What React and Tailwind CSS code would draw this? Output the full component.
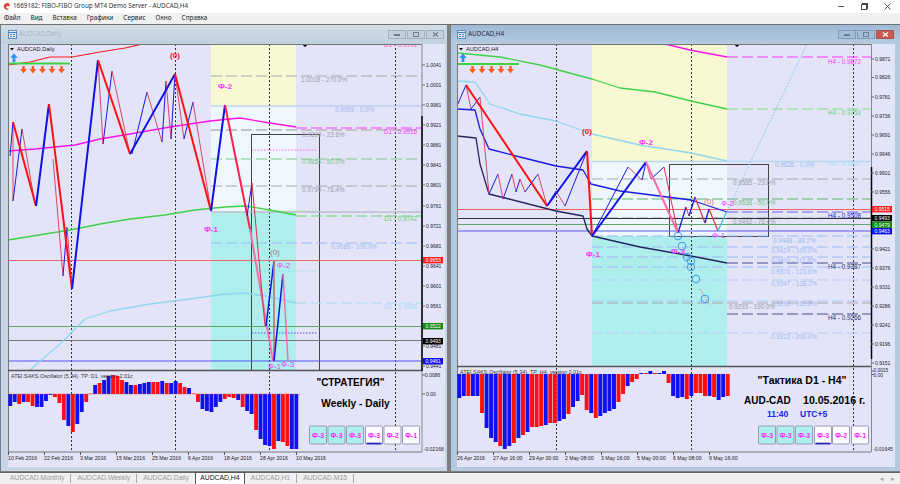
const GRAY = "#9b9ba6", BLUE = "#9db9f2", GREEN = "#74c07c", MAG = "#ff33ff", MA = "#ff10f0";

function Poly({ p, c, w = 1, dash, op }) {
  return <polyline points={p} fill="none" stroke={c} strokeWidth={w} strokeDasharray={dash} opacity={op} strokeLinejoin="round" />;
}
function H({ x1, x2, y, c, w = 1, dash }) {
  return <line x1={x1} x2={x2} y1={y} y2={y} stroke={c} strokeWidth={w} strokeDasharray={dash} />;
}
function V({ x, y1, y2, c = "#333", w = 1, dash = "2 2" }) {
  return <line x1={x} x2={x} y1={y1} y2={y2} stroke={c} strokeWidth={w} strokeDasharray={dash} />;
}
function T({ x, y, c = "#000", s = 6.3, b, children, anchor }) {
  return <text x={x} y={y} fill={c} fontSize={s} fontWeight={b ? 700 : 400} textAnchor={anchor}>{children}</text>;
}
function ArrowDown({ x, y }) {
  return <path d={`M${x - 1.2} ${y - 4}h2.4v3h2.2l-3.4 4.6-3.4-4.6h2.2z`} fill="#ff5a1f" />;
}
function ArrowUp({ x, y }) {
  return <path d={`M${x} ${y - 4.5}l3.8 4.2h-2.4v4.4h-2.8v-4.4h-2.4z`} fill="#2a93f0" />;
}
function Btn({ x, w = 17, y = 427, teal, label, under }) {
  return (
    <g>
      <rect x={x} y={y} width={w} height={18} rx="1" fill={teal ? "#aeeeec" : "#fbfbff"} stroke="#9a9ab8" strokeWidth="1" />
      {under && <line x1={x + 1} x2={x + w - 1} y1={y + 17.5} y2={y + 17.5} stroke="#2020c0" strokeWidth="1.6" />}
      <text x={x + w / 2} y={y + 11.5} fill="#ff1fff" fontSize="7" fontWeight="700" textAnchor="middle">{label}</text>
    </g>
  );
}
function Price({ x, y, bg, fg = "#fff", children }) {
  return (
    <g>
      <rect x={x} y={y - 3} width={20} height={6.4} fill={bg} />
      <text x={x + 2.5} y={y + 2} fill={fg} fontSize="5">{children}</text>
    </g>
  );
}
function Bars({ data, x0, step, zero }) {
  return data.map(([col, h], i) => (
    <rect key={i} x={x0 + i * step} width={step - 0.6} y={h >= 0 ? zero - h : zero} height={Math.abs(h)} fill={col === "b" ? "#1010f0" : "#ff0f0f"} />
  ));
}

const leftBars = "b-12 b-8 r-10 b-8 r-8 r-12 b-13 b-13 b-7 b-1 r-3 r-9 r-26 b-32 r-38 b-30 b-18 r-8 r0.5 b9 r11 b14 b18 r19 r18 r14 b12 b9 r9 b10 b11 b12 r12 r12 b13 r11 b11 b13 r11 r7 b6 r0.5 r-8 b-15 b-17 b-18 b-13 b-8 r-5 r-3 r-4 b-6 r-13 b-17 b-20 r-36 b-45 b-51 b-52 r-55 b-47 r-48 r-52 b-55 b-55"
  .split(" ").map(s => [s[0], parseFloat(s.slice(1))]);
const rightBars = "b-24 b-22 r-22 b-22 b-22 r-39 b-54 b-64 b-68 r-72 b-75 b-72 r-69 b-64 r-61 b-58 r-53 r-53 r-52 b-51 r-49 r-49 b-47 b-45 r-40 b-33 b-27 r-21 r-36 b-39 r-44 b-42 b-39 b-37 b-35 r-28 r-20 b-12 r-8 r-5 b1 r1 b3 r1 b1 b3 r-9 b-22 b-24 b-23 r-25 b-22 r-19 r-19 r-22 b-22 r-23 b-26 b-23 r-22"
  .split(" ").map(s => [s[0], parseFloat(s.slice(1))]);

function LeftChart() {
  const ticks = [[1.0041, 66], [1.0001, 86], [0.9961, 106], [0.9921, 126], [0.9881, 146], [0.9841, 166], [0.9801, 186], [0.9761, 207], [0.9721, 227], [0.9681, 247], [0.9641, 267], [0.9601, 287], [0.9561, 307], [0.9481, 347], [0.9441, 367]];
  const dates = [[8, "10 Feb 2016"], [44, "22 Feb 2016"], [80, "3 Mar 2016"], [116, "15 Mar 2016"], [152, "25 Mar 2016"], [188, "6 Apr 2016"], [224, "18 Apr 2016"], [260, "28 Apr 2016"], [296, "10 May 2016"]];
  return (
    <svg viewBox="8 45 437 423" className="block w-[437px] h-[423px]">
      <rect x="8" y="45" width="437" height="423" fill="#e4e4f8" />
      <rect x="211" y="45" width="85" height="62" fill="#f8f8d2" />
      <rect x="211" y="107" width="85" height="106" fill="#eef6fe" />
      <rect x="211" y="213" width="85" height="158" fill="#aeeeec" />
      <rect x="251.5" y="135.5" width="68" height="236" fill="none" stroke="#444" />
      {[71.5, 175.5, 269.5, 395.5].map(x => <V key={x} x={x} y1={45} y2={453} />)}

      <H x1={211} x2={422} y={77} c="#a8a8a8" w={1.2} dash="11 4" />
      <H x1={211} x2={422} y={107} c="#a9c2f0" />
      <H x1={211} x2={422} y={131} c="#b4b4b4" w={1.5} dash="11 4" />
      <H x1={211} x2={422} y={160} c="#7ccb87" w={1.2} dash="11 4" />
      <H x1={211} x2={422} y={187} c="#a8a8a8" w={1.2} dash="11 4" />
      <H x1={211} x2={422} y={213} c="#bdbdc8" w={1.6} />
      <H x1={211} x2={422} y={244} c="#9db9f2" w={1.2} dash="11 4" />
      <H x1={296} x2={422} y={129} c={MAG} w={1.2} dash="11 4" />
      <H x1={296} x2={422} y={217} c="#63d56b" w={1.2} dash="11 4" />
      <H x1={296} x2={422} y={304} c="#a6dcf2" w={1.2} dash="11 4" />
      <H x1={252} x2={318} y={151} c="#ff66ff" dash="1.5 1.5" />
      <H x1={252} x2={318} y={212} c="#9fd8a8" dash="1.5 1.5" />
      <H x1={252} x2={318} y={272} c="#8fdcf0" dash="1.5 1.5" />
      <H x1={252} x2={318} y={334} c="#8080f0" w={1.4} dash="1.5 1.5" />

      <H x1={8} x2={422} y={261.5} c="#e86a6a" />
      <H x1={8} x2={422} y={327.5} c="#5fa868" />
      <H x1={8} x2={422} y={341.5} c="#777" w={1.2} />
      <H x1={8} x2={422} y={362} c="#5555f5" />

      <Poly p="9,66 30,63 50,58 72,58 100,53 125,49 143,45" c="#ff1a1a" w={1.2} />
      <H x1={9} x2={70} y={64.5} c="#3fd040" w={2} />
      <Poly p="8,152 35,150 75,146 100,140 130,135 170,128 210,122 240,119 270,124 296,128" c={MA} w={1.3} />
      <Poly p="8,241 45,235 70,231 100,225 130,220 165,216 195,211 225,208 245,207 270,211 296,216" c="#3fd048" w={1.3} />
      <Poly p="30,371 60,345 85,320 110,312 150,305 190,300 225,295 245,294 270,298 296,304" c="#8fd6ee" w={1.3} />

      <Poly p="13,123 13,202" c="#d84868" />
      <Poly p="22,130 35,205" c="#d84868" />
      <Poly p="53,160 63,277" c="#d84868" />
      <Poly p="63,277 67,228" c="#1a1ae0" />
      <Poly p="67,228 72,290" c="#e23a60" />
      <Poly p="98,61 103,145" c="#d84868" />
      <Poly p="103,145 112,72" c="#1a1ae0" />
      <Poly p="112,72 130,155" c="#d84868" />
      <Poly p="132,155 147,93" c="#1a1ae0" />
      <Poly p="147,93 162,143" c="#d84868" />
      <Poly p="162,143 166,82" c="#1a1ae0" />
      <Poly p="166,82 171,140" c="#d84868" />
      <Poly p="171,140 175,75" c="#1a1ae0" />
      <Poly p="175,75 184,140" c="#d84868" />
      <Poly p="184,140 193,103" c="#1a1ae0" />
      <Poly p="193,103 211,212" c="#d84868" />
      <Poly p="13,202 22,130" c="#1a1ae0" />
      <Poly p="10,157 13,123" c="#1a1ae0" />

      <Poly p="13,123 36,207" c="#ff1010" w={2} />
      <Poly p="36,207 49,105" c="#1010e8" w={2} />
      <Poly p="49,105 72,290" c="#ff1010" w={2} />
      <Poly p="72,290 98,61" c="#1010e8" w={2} />
      <Poly p="98,61 130,155" c="#ff1010" w={2} />
      <Poly p="130,155 175,75" c="#1010e8" w={2} />
      <Poly p="175,75 211,212" c="#ff1010" w={2} />
      <Poly p="211,212 225,106" c="#1010e8" w={2} />
      <Poly p="225,106 250,230" c="#ff2050" w={2} />
      <Poly p="250,230 273,362" c="#ff6aa8" w={2} />
      <Poly p="247,217 252,184" c="#1a1ae0" />
      <Poly p="252,184 265,327" c="#d83050" />
      <Poly p="266,327 274,262" c="#1010e8" w={1.5} />
      <Poly p="274,262 274,362" c="#c86a7a" w={1.6} />
      <Poly p="274,362 283,275" c="#1010e8" w={1.5} />
      <Poly p="283,275 288,362" c="#ff6aa8" w={1.5} />

      <polygon points="301.5,45 308.5,45 305,48" fill="#000" />
      <polygon points="10,49 14,49 12,51.5" fill="#000" />
      <T x={17} y={52} s={5.6} c="#222">AUDCAD,Daily</T>
      <ArrowUp x={14} y={59} />
      {[23.5, 33, 42.5, 52, 61.5].map(x => <ArrowDown key={x} x={x} y={71} />)}

      <T x={384} y={48} c="#ff5a9a">D1 - 0.9991</T>
      <T x={301} y={83} c={GRAY}>1.0018 - 270.0%</T>
      <T x={335} y={113} c={BLUE}>0.9959 - 0.0%</T>
      <T x={384} y={134.5} c={MAG}>D1 - 0.9916</T>
      <T x={302} y={138} c={GRAY}>0.9899 - 23.6%</T>
      <T x={302} y={165} c={GREEN}>0.9854 - 50.0%</T>
      <T x={302} y={193} c={GRAY}>0.9799 - 76.4%</T>
      <T x={384} y={222} c="#68d070">D1 - 0.9742</T>
      <T x={331} y={250} c={BLUE}>0.9686 - 100.0%</T>
      <T x={384} y={310} c="#a6dcf2">D1 - 0.9568</T>

      <T x={175} y={59} c="#ff1010" s={8} b anchor="middle">(0)</T>
      <T x={218} y={90} c={MAG} s={8} b>Ф-2</T>
      <T x={204} y={233} c={MAG} s={8} b>Ф-1</T>
      <T x={270} y={256} c="#a08080" s={8}>(0)</T>
      <T x={277} y={269} c={MAG} s={8}>Ф-2</T>
      <T x={268} y={370} c={MAG} s={8}>Ф-1</T>
      <T x={281} y={368} c={MAG} s={8}>Ф-3</T>

      <line x1="8.5" x2="8.5" y1="45" y2="453" stroke="#777" />
      <H x1={8} x2={422} y={45.5} c="#777" />
      <H x1={8} x2={422} y={371.5} c="#555" w={1.6} />
      <H x1={8} x2={422} y={453} c="#777" />
      <line x1="422" x2="422" y1="45" y2="453" stroke="#888" strokeWidth="1" />
      <line x1="422" x2="422" y1="117" y2="372" stroke="#000" strokeWidth="1.5" />

      {ticks.map(([v, y]) => (
        <g key={y}>
          <H x1={422} x2={425} y={y} c="#666" />
          <T x={426} y={y + 1.8} s={5} c="#222">{v.toFixed(4)}</T>
        </g>
      ))}
      <Price x={423} y={261} bg="#ff2020">0.9653</Price>
      <Price x={423} y={327} bg="#108a10">0.9522</Price>
      <Price x={423} y={342} bg="#000">0.9493</Price>
      <Price x={423} y={362} bg="#1010e8">0.9461</Price>

      <Bars data={leftBars} x0={8.3} step={4.47} zero={395} />
      <H x1={8} x2={300} y={395} c="#d05050" w={0.4} />
      <T x={11} y={378.5} s={5.4} c="#333">ATEI.SAKS.Oscillator (5,34). TP: D1. version 2.01c</T>
      <T x={350.5} y={387} s={10} b anchor="middle">"СТРАТЕГИЯ"</T>
      <T x={355.5} y={408} s={10.2} b anchor="middle">Weekly - Daily</T>
      <Btn x={309.5} teal label="Ф-3" />
      <Btn x={328} teal label="Ф-3" />
      <Btn x={346.5} teal label="Ф-3" />
      <Btn x={365.5} label="Ф-3" under />
      <Btn x={384} label="Ф-2" />
      <Btn x={402.5} label="Ф-1" />
      <H x1={422} x2={425} y={376} c="#666" />
      <H x1={422} x2={425} y={395} c="#666" />
      <T x={425} y={377.5} s={5} c="#222">0.0086</T>
      <T x={426} y={396.8} s={5} c="#222">0.00</T>
      <T x={424} y={451.5} s={5} c="#222">-0.02168</T>
      {dates.map(([x, s]) => (
        <g key={x}>
          <V x={x + 0.5} y1={453} y2={456} c="#555" dash="none" />
          <T x={x} y={461} s={5.2} c="#222">{s}</T>
        </g>
      ))}
    </svg>
  );
}

function RightChart() {
  const ticks = [[0.9871, 60], [0.9826, 78.5], [0.9781, 98], [0.9736, 117], [0.9691, 136], [0.9646, 155], [0.9601, 174], [0.9556, 193], [0.9421, 250], [0.9376, 269], [0.9331, 288], [0.9286, 307], [0.9241, 326], [0.9196, 345], [0.9151, 364]];
  const dates = [[457, "26 Apr 2016"], [493, "27 Apr 16:00"], [529, "29 Apr 00:00"], [565, "2 May 08:00"], [601, "3 May 16:00"], [637, "5 May 00:00"], [673, "6 May 08:00"], [709, "9 May 16:00"]];
  const levels = [[237, "#9db9f2"], [248, "#9db9f2"], [258, "#9db9f2"], [268, "#9db9f2"], [281, "#b8ccf4"], [302, "#b0c6f2"], [334, "#b8ccf4"]];
  return (
    <svg viewBox="457 45 438 423" className="block w-[438px] h-[423px]">
      <rect x="457" y="45" width="438" height="423" fill="#e4e4f8" />
      <rect x="592" y="45" width="135" height="118" fill="#f8f8d2" />
      <rect x="592" y="163" width="135" height="74" fill="#eef6fe" />
      <rect x="592" y="237" width="135" height="130" fill="#aeeeec" />
      <rect x="669.5" y="165.5" width="99" height="72" fill="none" stroke="#444" />
      {[556.5, 691.5, 853.5].map(x => <V key={x} x={x} y1={45} y2={453} />)}

      <H x1={592} x2={871} y={162.5} c="#b8d8f0" w={1.4} />
      <H x1={592} x2={871} y={180} c="#a8a8a8" w={1.2} dash="11 4" />
      <H x1={592} x2={871} y={200} c="#5fb86a" w={1.2} dash="11 4" />
      <H x1={592} x2={871} y={219} c="#a0a0a0" w={1.2} dash="11 4" />
      <H x1={592} x2={871} y={304} c="#a8a8a8" w={1.2} dash="11 4" />
      {levels.map(([y, c]) => <H key={y} x1={592} x2={871} y={y} c={c} w={1.2} dash="11 4" />)}
      <H x1={727} x2={871} y={213} c="#9090f0" w={1.4} dash="11 4" />
      <H x1={727} x2={871} y={58} c={MAG} w={1.2} dash="11 4" />
      <H x1={727} x2={871} y={110} c="#9ee0a8" w={1.4} dash="11 4" />
      <H x1={727} x2={871} y={264} c="#4a4a90" w={1.2} dash="11 4" />
      <H x1={727} x2={871} y={315} c="#4a4a90" w={1.2} dash="11 4" />

      <H x1={457} x2={871} y={210.5} c="#f06060" />
      <H x1={457} x2={871} y={219.5} c="#333" w={1.2} />
      <H x1={457} x2={871} y={225.5} c="#5fa868" />
      <H x1={457} x2={871} y={232} c="#5a5af5" />

      <Poly p="458,54 500,58 540,66 592,80 620,89 655,93 691,102 727,110" c="#3fd048" w={1.3} />
      <H x1={458} x2={519} y={65} c="#3fd040" w={2} />
      <Poly p="665,45 690,51 727,58" c={MA} w={1.3} />
      <Poly p="457,82 475,83 490,105 520,115 556,122 592,135 640,146 691,154 727,162" c="#8fd6ee" w={1.3} />
      <Poly p="457,110 475,111 480,130 489,150 520,158 556,167 583,171 591,185 620,192 691,201 727,213" c="#1a1ae8" w={1.3} />
      <Poly p="457,137 476,139 480,165 489,195 505,199 556,212 583,217 587,230 592,237 640,248 691,257 727,264" c="#24245e" w={1.3} />

      <Poly p="457,107 466,86" c="#1a1ae0" />
      <Poly p="466,86 471,110" c="#d84868" />
      <Poly p="471,110 480,98" c="#1a1ae0" />
      <Poly p="480,98 489,195" c="#d84868" />
      <Poly p="489,195 498,175" c="#1a1ae0" />
      <Poly p="498,175 503,200" c="#d84868" />
      <Poly p="503,200 512,175" c="#1a1ae0" />
      <Poly p="512,175 516,193" c="#d84868" />
      <Poly p="516,193 520,180" c="#1a1ae0" />
      <Poly p="520,180 525,193" c="#d84868" />
      <Poly p="525,193 538,175" c="#1a1ae0" />
      <Poly p="538,175 547,207" c="#d84868" />
      <Poly p="547,207 556,192" c="#1a1ae0" />
      <Poly p="556,192 565,207" c="#d84868" />
      <Poly p="565,207 587,152" c="#1a1ae0" />
      <Poly p="592,237 628,168" c="#1a1ae0" />
      <Poly p="628,168 642,181" c="#d84868" />
      <Poly p="642,181 646,163" c="#1a1ae0" />
      <Poly p="646,163 651,180" c="#d84868" />
      <Poly p="651,180 664,168" c="#1a1ae0" />
      <Poly p="664,168 678,234" c="#e03050" />

      <Poly p="466,86 547,207" c="#ff1010" w={2} />
      <Poly p="547,207 587,152" c="#1010e8" w={2} />
      <Poly p="587,152 592,237" c="#ff1010" w={2} />
      <Poly p="592,237 646,163" c="#1010e8" w={2} />
      <Poly p="646,163 678,234" c="#ff6aa8" w={2} />
      <Poly p="678,234 686,208" c="#1a1ae0" w={1.3} />
      <Poly p="686,208 689,217" c="#e03050" />
      <Poly p="689,217 695,198" c="#1a1ae0" w={1.3} />
      <Poly p="695,198 705,224" c="#e03050" w={1.2} />
      <Poly p="705,224 709,210" c="#1a1ae0" w={1.3} />
      <Poly p="709,210 718,232" c="#e03050" w={1.2} />
      <Poly p="718,232 727,212" c="#40b8f0" w={1.3} />
      <Poly p="727,212 807,45" c="#70c8f8" dash="1.5 1.5" />
      <Poly p="700,290 710,306" c="#e09090" dash="2 1" />

      {[[678, 237], [682, 247], [687, 258], [691, 262], [691, 268], [696, 280], [705, 300]].map(([x, y]) => (
        <circle key={x + "-" + y} cx={x} cy={y} r="3.8" fill="none" stroke="#3a9cf0" strokeWidth="1" />
      ))}

      <polygon points="733.5,45 740.5,45 737,48" fill="#000" />
      <polygon points="459,49 463,49 461,51.5" fill="#000" />
      <T x={466} y={52} s={5.6} c="#222">AUDCAD,H4</T>
      <ArrowUp x={463} y={59} />
      {[472.5, 482, 491.5, 501, 510.5].map(x => <ArrowDown key={x} x={x} y={71} />)}

      <T x={828} y={65} c={MAG}>H4 - 0.9872</T>
      <T x={828} y={116} c="#68d070">H4 - 0.9751</T>
      <T x={775} y={168} c={BLUE}>0.9626 - 0.0%</T>
      <T x={828} y={167} c="#a6dcf2">H4 - 0.9630</T>
      <T x={733} y={186} c={GRAY}>0.9585 - 23.6%</T>
      <T x={733} y={206} c={GREEN}>0.9538 - 50.0%</T>
      <T x={828} y={219} c="#2020d0">H4 - 0.9508</T>
      <T x={733} y={225} c={GRAY}>0.9492 - 76.4%</T>
      <T x={773} y={244} c={BLUE}>0.9448 - 88.2%</T>
      <T x={771} y={254} c={BLUE}>0.9424 - 100.0%</T>
      <T x={771} y={264} c={BLUE}>0.9400 - 111.8%</T>
      <T x={771} y={275} c={BLUE}>0.9376 - 123.6%</T>
      <T x={828} y={270} c="#303070">H4 - 0.9387</T>
      <T x={771} y={287} c={BLUE}>0.9347 - 138.2%</T>
      <T x={771} y={307} c={BLUE}>0.9299 - 161.8%</T>
      <T x={729} y={310} c={GRAY}>0.9293 - 190.0%</T>
      <T x={828} y={321} c="#303070">H4 - 0.9266</T>
      <T x={771} y={340} c={BLUE}>0.9222 - 200.0%</T>

      <T x={587} y={135} c="#ff1010" s={8} b anchor="middle">(0)</T>
      <T x={639} y={146} c={MAG} s={8} b>Ф-2</T>
      <T x={586} y={258} c={MAG} s={8} b>Ф-1</T>
      <T x={671} y={255} c={MAG} s={8} b>Ф-3</T>
      <T x={709} y={205} c="#e07070" s={8} anchor="middle">(0)</T>
      <T x={721} y={207} c={MAG} s={8}>Ф-2</T>
      <T x={712} y={239} c={MAG} s={8}>Ф-1</T>

      <line x1="457.5" x2="457.5" y1="45" y2="453" stroke="#777" />
      <H x1={457} x2={871} y={45.5} c="#777" />
      <H x1={457} x2={871} y={367.5} c="#555" w={1.6} />
      <H x1={457} x2={871} y={453} c="#777" />
      <line x1="871.5" x2="871.5" y1="45" y2="453" stroke="#888" strokeWidth="1" />
      <line x1="871.5" x2="871.5" y1="168" y2="360" stroke="#000" strokeWidth="1.5" />

      {ticks.map(([v, y]) => (
        <g key={y}>
          <H x1={871} x2={874} y={y} c="#666" />
          <T x={875} y={y + 1.8} s={5} c="#222">{v.toFixed(4)}</T>
        </g>
      ))}
      <Price x={872} y={210} bg="#ff2020">0.9515</Price>
      <Price x={872} y={219} bg="#000">0.9493</Price>
      <Price x={872} y={225.5} bg="#108a10">0.9479</Price>
      <Price x={872} y={232} bg="#1010e8">0.9463</Price>

      <Bars data={rightBars} x0={457.3} step={4.55} zero={375} />
      <T x={460} y={374.5} s={5.4} c="#333">ATEI.SAKS.Oscillator (5,34). TP: H4. version 2.01c</T>
      <T x={802} y={384.5} s={10.5} b anchor="middle">"Тактика D1 - H4"</T>
      <T x={744} y={404.5} s={10} b>AUD-CAD</T>
      <T x={803} y={404.5} s={10.6} b>10.05.2016 г.</T>
      <T x={767} y={418} s={8.5} b c="#2020f0">11:40</T>
      <T x={800} y={418} s={8.5} b c="#2020f0">UTC+5</T>
      <Btn x={758.5} teal label="Ф-3" />
      <Btn x={777} teal label="Ф-3" />
      <Btn x={795.5} teal label="Ф-3" />
      <Btn x={814.5} label="Ф-3" under />
      <Btn x={832.5} label="Ф-2" />
      <Btn x={851.5} label="Ф-1" />
      <H x1={871} x2={874} y={372} c="#666" />
      <H x1={871} x2={874} y={375.5} c="#666" />
      <T x={873.5} y={372.5} s={4.8} c="#222">0.0015</T>
      <T x={873.5} y={377.5} s={4.8} c="#222">0.00</T>
      <T x={873} y={451.5} s={5} c="#222">-0.01645</T>
      {dates.map(([x, s]) => (
        <g key={x}>
          <V x={x + 0.5} y1={453} y2={456} c="#555" dash="none" />
          <T x={x} y={461} s={5.2} c="#222">{s}</T>
        </g>
      ))}
    </svg>
  );
}

function WinIcon() {
  return (
    <svg width="9" height="9" viewBox="0 0 9 9" className="shrink-0">
      <rect x="0.5" y="0.5" width="8" height="8" fill="#dfeaf5" stroke="#5f8fc0" />
      <path d="M0.5 2.5H8.5M2 4.5h2M5 4.5h2M2 6.5h2M5 6.5h2" stroke="#4a7fb8" strokeWidth="1" />
    </svg>
  );
}

function WinBtn({ w = "w-[18px]", danger, active, kind }) {
  const cls = danger
    ? "bg-[#c9584e] border-[#a8564f]"
    : active
    ? "bg-[#a4bdd8] border-[#7f9bb8]"
    : "bg-[#c2d0dc] border-[#a0b0bf]";
  return (
    <div className={`${w} h-[9px] border flex items-center justify-center ${cls}`}>
      {kind === "min" && <div className="w-[6px] h-[2px] bg-[#6d7f92]" />}
      {kind === "max" && <div className="w-[6px] h-[5px] border border-[#6d7f92]" />}
      {kind === "x" && (
        <svg width="7" height="5" viewBox="0 0 7 5">
          <path d="M1 0.5L6 4.5M6 0.5L1 4.5" stroke={danger ? "#fff" : "#6d7f92"} strokeWidth="1.2" />
        </svg>
      )}
    </div>
  );
}

function Tab({ label, active, sep = true }) {
  if (active) {
    return (
      <div className="h-[12px] w-[50px] bg-white border border-b-0 border-[#555] flex items-center justify-center text-[#111] text-[6.8px] leading-none shrink-0 -mt-[1px]">
        {label}
      </div>
    );
  }
  return <div className={`h-[9px] px-[6px] flex items-center text-[#9a9a9a] text-[6.8px] leading-none shrink-0 ${sep ? "border-r border-[#a8a8a8]" : ""}`}>{label}</div>;
}

export default function App() {
  return (
    <div className="w-[900px] h-[484px] overflow-hidden flex flex-col bg-[#f0f0f0] [font-family:'Liberation_Sans',sans-serif]">
      <div className="h-[13px] bg-white flex items-center shrink-0 relative">
        <svg width="8" height="8" viewBox="0 0 8 8" className="ml-[3px] shrink-0">
          <path d="M1 4a3 3 0 0 1 6-1.5L5 3.5 4 2.5 3 5l3 1a3 3 0 0 1-5-2z" fill="#d83a30" />
        </svg>
        <span className="ml-[2px] text-[6.3px] leading-none text-[#333] [font-family:'Noto_Sans',sans-serif]">1669182: FIBO-FIBO Group MT4 Demo Server - AUDCAD,H4</span>
        <div className="ml-auto flex items-center gap-[17px] pr-[9px]">
          <div className="w-[6px] h-px bg-[#555]" />
          <div className="w-[6px] h-[6px] border border-[#444] shadow-[1px_-1px_0_#444]" />
          <svg width="7" height="7" viewBox="0 0 7 7"><path d="M0.5 0.5L6.5 6.5M6.5 0.5L0.5 6.5" stroke="#444" strokeWidth="0.9" /></svg>
        </div>
      </div>
      <div className="h-[11px] bg-[#f0f0f0] flex items-center gap-[10px] pl-[4px] text-[6.4px] text-[#222] leading-none shrink-0 [font-family:'Noto_Sans',sans-serif]">
        <span>Файл</span><span>Вид</span><span>Вставка</span><span>Графики</span><span>Сервис</span><span>Окно</span><span>Справка</span>
      </div>
      <div className="h-px bg-[#6f6f6f] shrink-0" />
      <div className="flex flex-1 min-h-0 bg-[#7f7f7f]">
        <div className="w-[447px] h-[446px] bg-[#c6d6e4] border-l border-[#6f7f8c] flex flex-col pl-[7px] pr-[2px] shrink-0">
          <div className="h-[19px] flex items-center pr-[1px] bg-gradient-to-b from-[#d2dee8] to-[#bfd0de] -ml-[7px] -mr-[2px] pl-[7px] shrink-0">
            <WinIcon />
            <span className="ml-[2px] text-[6.4px] text-[#a9b4be] leading-none [font-family:'Noto_Sans',sans-serif]">AUDCAD,Daily</span>
            <div className="ml-auto flex gap-px pr-[2px]">
              <WinBtn kind="min" /><WinBtn kind="max" /><WinBtn kind="x" />
            </div>
          </div>
          <LeftChart />
        </div>
        <div className="w-[450px] h-[446px] ml-[3px] bg-[#b2c9de] border-l border-[#6f7f8c] flex flex-col pl-[6px] shrink-0">
          <div className="h-[19px] flex items-center bg-gradient-to-b from-[#9fb9d6] to-[#b4cbe0] -ml-[6px] pl-[6px] shrink-0">
            <WinIcon />
            <span className="ml-[2px] text-[6.4px] text-[#1f2a38] leading-none [font-family:'Noto_Sans',sans-serif]">AUDCAD,H4</span>
            <div className="ml-auto flex gap-px pr-[6px]">
              <WinBtn kind="min" active /><WinBtn kind="max" active /><WinBtn kind="x" danger />
            </div>
          </div>
          <RightChart />
        </div>
      </div>
      <div className="h-[12px] bg-[#f0f0f0] border-t border-[#666] flex items-center pl-[4px] shrink-0 relative [font-family:'Liberation_Sans',sans-serif]">
        <Tab label="AUDCAD,Monthly" />
        <Tab label="AUDCAD,Weekly" />
        <Tab label="AUDCAD,Daily" sep={false} />
        <Tab label="AUDCAD,H4" active />
        <Tab label="AUDCAD,H1" />
        <Tab label="AUDCAD,M15" />
        <div className="ml-auto flex gap-[7px] pr-[5px] text-[#aaa] text-[7px] leading-none">
          <span>◂</span><span>▸</span>
        </div>
      </div>
    </div>
  );
}
